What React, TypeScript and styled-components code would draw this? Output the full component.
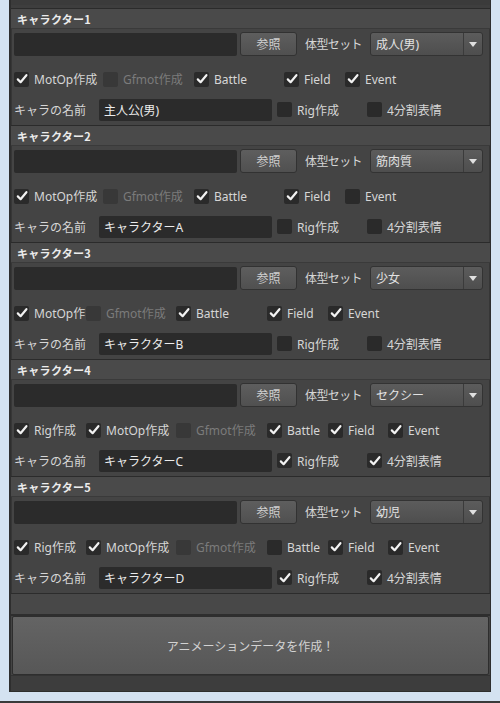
import styled, { createGlobalStyle } from "styled-components";

const GlobalStyle = createGlobalStyle`
  html, body {
    margin: 0;
    padding: 0;
    background: #2a2a2a;
  }
  * {
    box-sizing: border-box;
  }
`;

type Check = { label: string; checked: boolean; disabled?: boolean };

type Character = {
  title: string;
  bodyType: string;
  name: string;
  columns: number[];
  checks: Check[];
  rig: boolean;
  face: boolean;
};

const characters: Character[] = [
  {
    title: "キャラクター1",
    bodyType: "成人(男)",
    name: "主人公(男)",
    columns: [89, 91, 90, 61, 80],
    checks: [
      { label: "MotOp作成", checked: true },
      { label: "Gfmot作成", checked: false, disabled: true },
      { label: "Battle", checked: true },
      { label: "Field", checked: true },
      { label: "Event", checked: true },
    ],
    rig: false,
    face: false,
  },
  {
    title: "キャラクター2",
    bodyType: "筋肉質",
    name: "キャラクターA",
    columns: [89, 91, 90, 61, 80],
    checks: [
      { label: "MotOp作成", checked: true },
      { label: "Gfmot作成", checked: false, disabled: true },
      { label: "Battle", checked: true },
      { label: "Field", checked: true },
      { label: "Event", checked: false },
    ],
    rig: false,
    face: false,
  },
  {
    title: "キャラクター3",
    bodyType: "少女",
    name: "キャラクターB",
    columns: [72, 90, 91, 61, 80],
    checks: [
      { label: "MotOp作", checked: true },
      { label: "Gfmot作成", checked: false, disabled: true },
      { label: "Battle", checked: true },
      { label: "Field", checked: true },
      { label: "Event", checked: true },
    ],
    rig: false,
    face: false,
  },
  {
    title: "キャラクター4",
    bodyType: "セクシー",
    name: "キャラクターC",
    columns: [72, 90, 91, 61, 60, 80],
    checks: [
      { label: "Rig作成", checked: true },
      { label: "MotOp作成", checked: true },
      { label: "Gfmot作成", checked: false, disabled: true },
      { label: "Battle", checked: true },
      { label: "Field", checked: true },
      { label: "Event", checked: true },
    ],
    rig: true,
    face: true,
  },
  {
    title: "キャラクター5",
    bodyType: "幼児",
    name: "キャラクターD",
    columns: [72, 90, 91, 61, 60, 80],
    checks: [
      { label: "Rig作成", checked: true },
      { label: "MotOp作成", checked: true },
      { label: "Gfmot作成", checked: false, disabled: true },
      { label: "Battle", checked: false },
      { label: "Field", checked: true },
      { label: "Event", checked: true },
    ],
    rig: true,
    face: true,
  },
];

const CheckBox = ({ label, checked, disabled, width }: Check & { width?: number }) => (
  <StyledCheckItem $width={width} $disabled={disabled}>
    <StyledBox $disabled={disabled}>
      {checked && (
        <svg width="12" height="12" viewBox="0 0 12 12">
          <path
            d="M1.8 6.4 L4.6 9.2 L10.4 2.2"
            fill="none"
            stroke="#f2f2f2"
            strokeWidth="2.2"
            strokeLinecap="round"
            strokeLinejoin="round"
          />
        </svg>
      )}
    </StyledBox>
    <span>{label}</span>
  </StyledCheckItem>
);

const CharacterSection = ({ data }: { data: Character }) => (
  <section>
    <StyledSectionHeader>{data.title}</StyledSectionHeader>
    <StyledSectionBody>
      <StyledPathRow>
        <StyledTextField />
        <StyledBrowseBtn>参照</StyledBrowseBtn>
        <StyledRowLabel>体型セット</StyledRowLabel>
        <StyledDropdown>
          <span>{data.bodyType}</span>
          <StyledDropArrow>
            <svg width="8" height="5" viewBox="0 0 8 5">
              <path d="M0 0 H8 L4 5 Z" fill="#e0e0e0" />
            </svg>
          </StyledDropArrow>
        </StyledDropdown>
      </StyledPathRow>
      <StyledCheckRow>
        {data.checks.map((c, i) => (
          <CheckBox key={c.label + i} {...c} width={data.columns[i]} />
        ))}
      </StyledCheckRow>
      <StyledNameRow>
        <StyledNameLabel>キャラの名前</StyledNameLabel>
        <StyledNameField>{data.name}</StyledNameField>
        <CheckBox label="Rig作成" checked={data.rig} width={90} />
        <CheckBox label="4分割表情" checked={data.face} width={100} />
      </StyledNameRow>
    </StyledSectionBody>
  </section>
);

export default function App() {
  return (
    <>
      <GlobalStyle />
      <StyledWindow>
        <StyledPanel>
          <StyledTopStrip />
          {characters.map((c) => (
            <CharacterSection key={c.title} data={c} />
          ))}
          <StyledSpacerStrip />
          <StyledCreateBtn>アニメーションデータを作成！</StyledCreateBtn>
          <StyledBottomStrip />
        </StyledPanel>
      </StyledWindow>
    </>
  );
}

const StyledWindow = styled.div`
  width: 500px;
  height: 703px;
  padding: 0 9px 9px 9px;
  background: #d4e2f1;
  border-bottom: 2px solid #3a3a3a;
  font-family: "Noto Sans", "Noto Sans CJK JP", sans-serif;
  font-size: 12px;
  color: #d4d4d4;
`;

const StyledPanel = styled.div`
  height: 692px;
  display: flex;
  flex-direction: column;
  background: #444444;
  border-left: 2px solid #2e2e2e;
  border-right: 1px solid #2e2e2e;
  border-bottom: 1px solid #2e2e2e;
  overflow: hidden;
`;

const StyledTopStrip = styled.div`
  height: 8px;
  flex: none;
  background: #3e3e3e;
  border-top: 5px solid #3b3b3b;
`;

const StyledSectionHeader = styled.div`
  height: 21px;
  display: flex;
  align-items: center;
  padding-left: 6px;
  background: #4a4a4a;
  border-top: 1px solid #2b2b2b;
  border-bottom: 1px solid #3a3a3a;
  font-family: "Noto Sans CJK JP", sans-serif;
  font-size: 11px;
  font-weight: 700;
  color: #ececec;
  letter-spacing: 0.3px;
`;

const StyledSectionBody = styled.div`
  height: 96px;
  padding: 3px 6px 3px 2px;
  background: #444444;
  border-left: 1px solid #363636;
  border-right: 1px solid #363636;
`;

const StyledPathRow = styled.div`
  height: 24px;
  display: flex;
  align-items: center;
`;

const StyledTextField = styled.div`
  flex: 1;
  height: 23px;
  background: #2b2b2b;
  border-radius: 2px;
`;

const StyledBrowseBtn = styled.div`
  width: 57px;
  height: 24px;
  margin-left: 3px;
  display: flex;
  align-items: center;
  justify-content: center;
  background: linear-gradient(#5e5e5e, #505050);
  border: 1px solid #323232;
  border-radius: 3px;
  color: #cfcfcf;
`;

const StyledRowLabel = styled.div`
  width: 73px;
  flex: none;
  text-align: center;
  color: #d6d6d6;
  letter-spacing: -0.6px;
`;

const StyledDropdown = styled.div`
  width: 113px;
  height: 24px;
  display: flex;
  align-items: center;
  padding-left: 5px;
  background: linear-gradient(#5c5c5c, #4e4e4e);
  border: 1px solid #333333;
  border-radius: 3px;
  color: #e2e2e2;

  span {
    flex: 1;
  }
`;

const StyledDropArrow = styled.div`
  width: 19px;
  height: 100%;
  display: flex;
  align-items: center;
  justify-content: center;
  border-left: 1px solid #3b3b3b;
`;

const StyledCheckRow = styled.div`
  height: 28px;
  margin: 9px 0 5px;
  display: flex;
  align-items: center;
`;

const StyledCheckItem = styled.div<{ $width?: number; $disabled?: boolean }>`
  width: ${(p) => (p.$width ? `${p.$width}px` : "auto")};
  flex: none;
  display: flex;
  align-items: center;
  gap: 5px;
  overflow: hidden;
  white-space: nowrap;
  color: ${(p) => (p.$disabled ? "#7b7b7b" : "#d6d6d6")};
`;

const StyledBox = styled.div<{ $disabled?: boolean }>`
  width: 15px;
  height: 15px;
  flex: none;
  display: flex;
  align-items: center;
  justify-content: center;
  background: ${(p) => (p.$disabled ? "#383838" : "#2a2a2a")};
  border-radius: 2px;
`;

const StyledNameRow = styled.div`
  height: 23px;
  display: flex;
  align-items: center;
`;

const StyledNameLabel = styled.div`
  width: 85px;
  flex: none;
  color: #d6d6d6;
`;

const StyledNameField = styled.div`
  width: 173px;
  height: 22px;
  margin-right: 5px;
  flex: none;
  display: flex;
  align-items: center;
  padding-left: 5px;
  background: #2b2b2b;
  border-radius: 2px;
  color: #ececec;
`;

const StyledSpacerStrip = styled.div`
  height: 23px;
  flex: none;
  background: #484848;
  border-top: 1px solid #2c2c2c;
  border-bottom: 2px solid #2e2e2e;
`;

const StyledCreateBtn = styled.div`
  height: 59px;
  flex: none;
  margin: 0 1px;
  display: flex;
  align-items: center;
  justify-content: center;
  background: linear-gradient(#646464, #575757);
  border: 1px solid #2e2e2e;
  border-radius: 2px;
  color: #d2d2d2;
`;

const StyledBottomStrip = styled.div`
  flex: 1;
  background: #3d3d3d;
  border-top: 1px solid #333333;
`;
